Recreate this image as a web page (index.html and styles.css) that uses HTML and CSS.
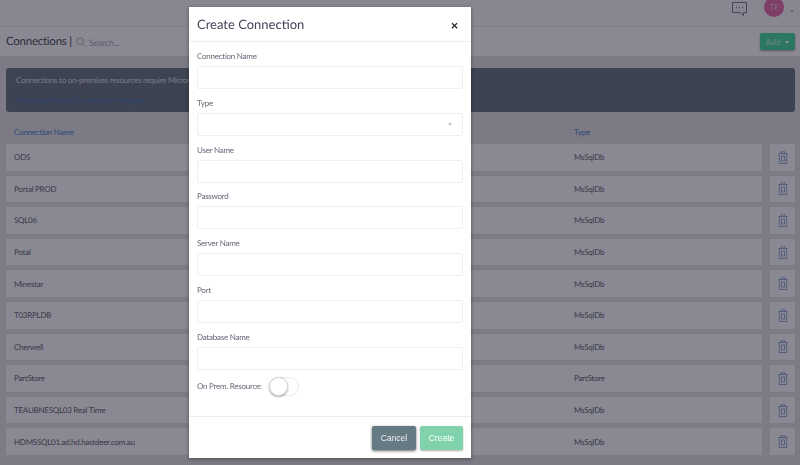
FILE: index.html
```html
<!DOCTYPE html>
<html lang="en">
<head>
    <meta charset="UTF-8">
    <meta name="viewport" content="width=device-width, initial-scale=1.0">
    <title>Connections</title>
    <link rel="stylesheet" href="styles.css">
</head>
<body>
    <div class="topbar">
        <svg class="chat-icon" width="17" height="16" viewBox="0 0 17 16" fill="none" stroke="currentColor" stroke-width="1">
            <path d="M1.5 1.5h14v10h-3v3l-3-3h-8z"/>
            <path d="M5 6.5h1M8 6.5h1M11 6.5h1" stroke-width="1.4"/>
        </svg>
        <div class="avatar">TE</div>
        <span class="caret caret-grey"></span>
    </div>

    <div class="page-header">
        <h1>Connections |</h1>
        <svg class="search-icon" width="10" height="10" viewBox="0 0 11 11" fill="none" stroke="currentColor" stroke-width="1">
            <circle cx="4.5" cy="4.5" r="3.7"/>
            <path d="M7.2 7.2l3.3 3.3"/>
        </svg>
        <span class="search-text">Search...</span>
        <button class="btn-add">Add <span class="caret"></span></button>
    </div>

    <div class="content">
        <div class="banner">
            <div>Connections to on-premises resources require Microsoft Hybrid Connection Manager.</div>
            <a href="#">Download Hybrid Connection Manager</a>
        </div>

        <div class="table-head">
            <div class="col-name">Connection Name</div>
            <div class="col-type">Type</div>
        </div>

        <div class="row"><div class="cells"><div class="col-name">ODS</div><div class="col-type">MsSqlDb</div></div><div class="trash"><svg width="10" height="13" viewBox="0 0 10 13" fill="none" stroke="currentColor" stroke-width="0.8"><path d="M.5 2.5h9M3 2.5V.8h4v1.7M1.3 2.5v10h7.4v-10"/><rect x="3.5" y="5" width="3" height="5"/></svg></div></div>
        <div class="row"><div class="cells"><div class="col-name">Portal PROD</div><div class="col-type">MsSqlDb</div></div><div class="trash"><svg width="10" height="13" viewBox="0 0 10 13" fill="none" stroke="currentColor" stroke-width="0.8"><path d="M.5 2.5h9M3 2.5V.8h4v1.7M1.3 2.5v10h7.4v-10"/><rect x="3.5" y="5" width="3" height="5"/></svg></div></div>
        <div class="row"><div class="cells"><div class="col-name">SQL06</div><div class="col-type">MsSqlDb</div></div><div class="trash"><svg width="10" height="13" viewBox="0 0 10 13" fill="none" stroke="currentColor" stroke-width="0.8"><path d="M.5 2.5h9M3 2.5V.8h4v1.7M1.3 2.5v10h7.4v-10"/><rect x="3.5" y="5" width="3" height="5"/></svg></div></div>
        <div class="row"><div class="cells"><div class="col-name">Potal</div><div class="col-type">MsSqlDb</div></div><div class="trash"><svg width="10" height="13" viewBox="0 0 10 13" fill="none" stroke="currentColor" stroke-width="0.8"><path d="M.5 2.5h9M3 2.5V.8h4v1.7M1.3 2.5v10h7.4v-10"/><rect x="3.5" y="5" width="3" height="5"/></svg></div></div>
        <div class="row"><div class="cells"><div class="col-name">Minestar</div><div class="col-type">MsSqlDb</div></div><div class="trash"><svg width="10" height="13" viewBox="0 0 10 13" fill="none" stroke="currentColor" stroke-width="0.8"><path d="M.5 2.5h9M3 2.5V.8h4v1.7M1.3 2.5v10h7.4v-10"/><rect x="3.5" y="5" width="3" height="5"/></svg></div></div>
        <div class="row"><div class="cells"><div class="col-name">T03RPLDB</div><div class="col-type">MsSqlDb</div></div><div class="trash"><svg width="10" height="13" viewBox="0 0 10 13" fill="none" stroke="currentColor" stroke-width="0.8"><path d="M.5 2.5h9M3 2.5V.8h4v1.7M1.3 2.5v10h7.4v-10"/><rect x="3.5" y="5" width="3" height="5"/></svg></div></div>
        <div class="row"><div class="cells"><div class="col-name">Cherwell</div><div class="col-type">MsSqlDb</div></div><div class="trash"><svg width="10" height="13" viewBox="0 0 10 13" fill="none" stroke="currentColor" stroke-width="0.8"><path d="M.5 2.5h9M3 2.5V.8h4v1.7M1.3 2.5v10h7.4v-10"/><rect x="3.5" y="5" width="3" height="5"/></svg></div></div>
        <div class="row"><div class="cells"><div class="col-name">PartStore</div><div class="col-type">PartStore</div></div><div class="trash"><svg width="10" height="13" viewBox="0 0 10 13" fill="none" stroke="currentColor" stroke-width="0.8"><path d="M.5 2.5h9M3 2.5V.8h4v1.7M1.3 2.5v10h7.4v-10"/><rect x="3.5" y="5" width="3" height="5"/></svg></div></div>
        <div class="row"><div class="cells"><div class="col-name">TEAUBNESQL03 Real Time</div><div class="col-type">MsSqlDb</div></div><div class="trash"><svg width="10" height="13" viewBox="0 0 10 13" fill="none" stroke="currentColor" stroke-width="0.8"><path d="M.5 2.5h9M3 2.5V.8h4v1.7M1.3 2.5v10h7.4v-10"/><rect x="3.5" y="5" width="3" height="5"/></svg></div></div>
        <div class="row"><div class="cells"><div class="col-name">HDMSSQL01.ad.hd.hastdeer.com.au</div><div class="col-type">MsSqlDb</div></div><div class="trash"><svg width="10" height="13" viewBox="0 0 10 13" fill="none" stroke="currentColor" stroke-width="0.8"><path d="M.5 2.5h9M3 2.5V.8h4v1.7M1.3 2.5v10h7.4v-10"/><rect x="3.5" y="5" width="3" height="5"/></svg></div></div>
    </div>

    <div class="backdrop"></div>

    <div class="modal">
        <div class="modal-header">
            <h2>Create Connection</h2>
            <span class="close">&times;</span>
        </div>
        <div class="modal-body">
            <label>Connection Name</label>
            <div class="field"></div>
            <label>Type</label>
            <div class="field field-select"><span class="caret caret-light"></span></div>
            <label>User Name</label>
            <div class="field"></div>
            <label>Password</label>
            <div class="field"></div>
            <label>Server Name</label>
            <div class="field"></div>
            <label>Port</label>
            <div class="field"></div>
            <label>Database Name</label>
            <div class="field"></div>
            <div class="toggle-row">
                <label>On Prem. Resource:</label>
                <div class="toggle"><div class="knob"></div></div>
            </div>
        </div>
        <div class="modal-footer">
            <button class="btn btn-cancel">Cancel</button>
            <button class="btn btn-create">Create</button>
        </div>
    </div>
</body>
</html>
```

FILE: styles.css
```css
html, body {
    height: 100%;
}

body {
    margin: 0;
    height: 465px;
    overflow: hidden;
    background-color: #dadadd;
    color: #54545e;
    font-family: Lato, 'Noto Sans', sans-serif;
    font-size: 8px;
    letter-spacing: -0.25px;
    text-rendering: geometricPrecision;
}

.topbar {
    height: 26px;
    display: flex;
    align-items: center;
    justify-content: flex-end;
    padding-right: 6px;
    background-color: #f2f2f5;
    border-bottom: 1px solid #e2e2e6;
}

.chat-icon {
    color: #6f6f7c;
    margin-right: 16px;
    margin-top: -9px;
}

.avatar {
    width: 20px;
    height: 20px;
    margin-top: -13px;
    border-radius: 50%;
    background-color: #e0609f;
    color: #f0b8d2;
    font-size: 8px;
    line-height: 20px;
    text-align: center;
    margin-right: 6px;
}

.caret {
    display: inline-block;
    width: 0;
    height: 0;
    border-left: 2.5px solid transparent;
    border-right: 2.5px solid transparent;
    border-top: 3px solid #fff;
}

.caret-grey {
    border-top-color: #b0b0b8;
    margin-top: -4px;
}

.page-header {
    height: 29px;
    display: flex;
    align-items: center;
    padding: 0 5px 0 6px;
    background-color: #f6f6f9;
}

h1 {
    margin: 0 4px 0 0;
    font-size: 11.5px;
    font-weight: 400;
    color: #3a3a48;
}

.search-icon {
    color: #a0a0ac;
    margin-right: 3px;
    margin-top: 1px;
}

.search-text {
    color: #a0a0ac;
    font-size: 9px;
    margin-top: 2px;
}

.btn-add {
    margin-left: auto;
    width: 35px;
    height: 17px;
    padding: 0;
    border: none;
    border-radius: 2px;
    background-color: #3ad296;
    color: #bfeedd;
    font-family: inherit;
    font-size: 8px;
    box-shadow: 0 1px 2px rgba(0, 0, 0, 0.4);
}

.btn-add .caret {
    margin-left: 3px;
    vertical-align: middle;
}

.content {
    padding: 12px 5px 0 6px;
}

.banner {
    height: 44px;
    box-sizing: border-box;
    padding: 2px 10px;
    border-radius: 3px;
    background-color: #5e6a77;
    color: #d4d8de;
    line-height: 20px;
}

.banner a {
    display: block;
    color: #3f6db0;
    text-decoration: none;
}

.table-head {
    display: flex;
    height: 32px;
    align-items: flex-end;
    padding-right: 33px;
    padding-bottom: 7px;
    box-sizing: border-box;
    color: #3f76c4;
}

.col-name {
    padding-left: 8px;
    flex: 1;
}

.col-type {
    width: 188px;
}

.row {
    display: flex;
    height: 26.6px;
    margin-bottom: 5px;
}

.cells {
    flex: 1;
    display: flex;
    align-items: center;
    background-color: #f6f6f9;
    margin-right: 8px;
}

.trash {
    width: 25px;
    display: flex;
    align-items: center;
    justify-content: center;
    background-color: #f6f6f9;
    color: #6d8cbc;
}

.backdrop {
    position: fixed;
    top: 0;
    left: 0;
    right: 0;
    bottom: 0;
    background-color: rgba(30, 28, 45, 0.5);
}

.modal {
    position: absolute;
    top: 7px;
    left: 189px;
    width: 282px;
    height: 451px;
    display: flex;
    flex-direction: column;
    background-color: #fff;
    box-shadow: 0 1px 4px rgba(0, 0, 0, 0.4);
}

.modal-header {
    height: 35px;
    flex-shrink: 0;
    box-sizing: border-box;
    display: flex;
    align-items: center;
    justify-content: space-between;
    padding: 0 13px 0 8px;
    border-bottom: 1px solid #eeeef2;
}

h2 {
    margin: 0;
    font-size: 13px;
    font-weight: 400;
    letter-spacing: 0;
    color: #45455a;
}

.close {
    color: #222;
    font-size: 13px;
    font-weight: 700;
    line-height: 1;
    margin-top: 3px;
}

.modal-body {
    flex: 1;
    padding: 7px 8px 0;
}

label {
    display: block;
    height: 17px;
    line-height: 15px;
    color: #666676;
    font-size: 8px;
}

.field {
    height: 23px;
    box-sizing: border-box;
    margin-bottom: 6.8px;
    border: 1px solid #eeeef4;
    border-radius: 2px;
    display: flex;
    align-items: center;
    justify-content: flex-end;
    padding-right: 10px;
}

.caret-light {
    border-top-color: #c4c4d0;
}

.toggle-row {
    display: flex;
    align-items: center;
    margin-top: 2px;
}

.toggle-row label {
    height: auto;
    margin-right: 7px;
}

.toggle {
    width: 30px;
    height: 19px;
    border: 1px solid #e8e8ec;
    border-radius: 10px;
    box-sizing: border-box;
}

.knob {
    width: 19px;
    height: 19px;
    margin: -1px 0 0 -1px;
    box-sizing: border-box;
    border-radius: 50%;
    background-color: #fff;
    border: 1px solid #d8d8dc;
    box-shadow: 0 1px 2px rgba(0, 0, 0, 0.35);
}

.modal-footer {
    height: 42px;
    flex-shrink: 0;
    box-sizing: border-box;
    display: flex;
    align-items: center;
    justify-content: flex-end;
    gap: 4px;
    padding: 0 8px;
    border-top: 1px solid #eeeef2;
}

.btn {
    height: 24px;
    border: none;
    border-radius: 2px;
    color: #fff;
    font-family: 'Liberation Sans', sans-serif;
    font-size: 8.5px;
    letter-spacing: 0;
    padding: 0;
    box-shadow: 0 1px 2px rgba(0, 0, 0, 0.3);
}

.btn-cancel {
    width: 44px;
    background-color: #667a84;
    color: #eef1f3;
    box-shadow: 0 1px 3px rgba(0, 0, 0, 0.6);
}

.btn-create {
    width: 43px;
    background-color: #80d2ab;
}
```
